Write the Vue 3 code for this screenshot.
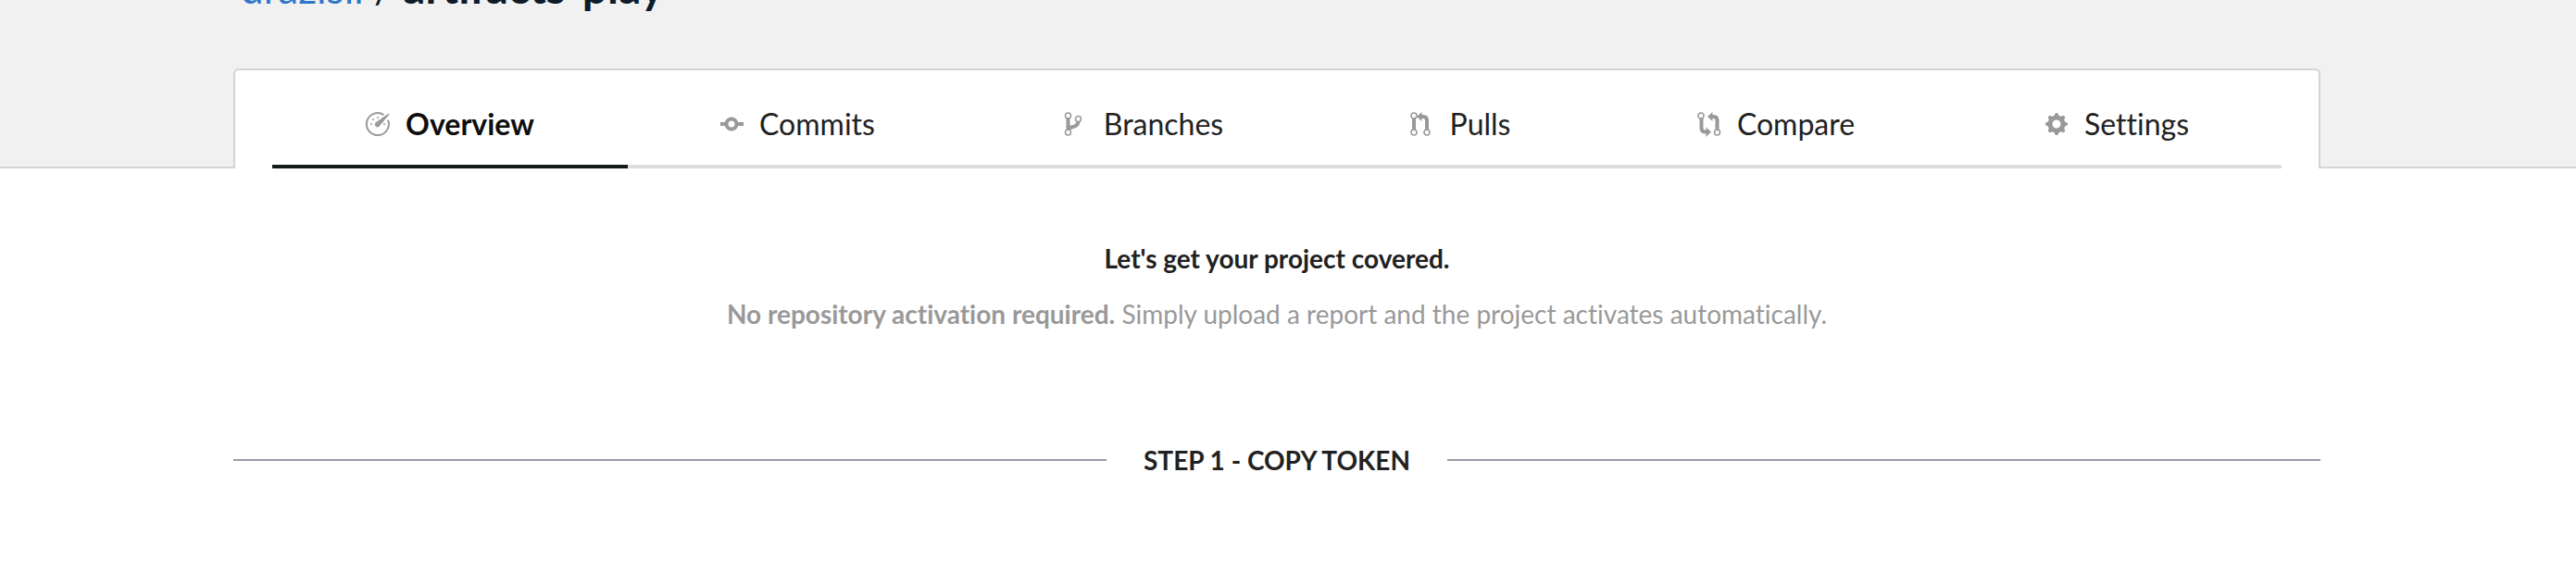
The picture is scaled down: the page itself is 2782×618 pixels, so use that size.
<script setup>
const tabs = [
  { name: 'Overview', icon: 'gauge', active: true },
  { name: 'Commits', icon: 'commit' },
  { name: 'Branches', icon: 'branch' },
  { name: 'Pulls', icon: 'pull' },
  { name: 'Compare', icon: 'compare' },
  { name: 'Settings', icon: 'gear' },
]
const teeth = [0, 45, 90, 135, 180, 225, 270, 315]
</script>

<template>
  <div class="page">
    <header class="head">
      <h1 class="title"><a href="#">drazisil</a> / <strong>artifacts-play</strong></h1>
      <nav class="card" aria-label="Repository">
        <div class="tabs">
          <a v-for="t in tabs" :key="t.name" href="#" class="tab" :class="{ active: t.active }">
            <svg class="icon" viewBox="0 0 26 26" aria-hidden="true">
              <g v-if="t.icon === 'gauge'">
                <path d="M19.5 3.1A12 12 0 1 0 24 8.6" class="line" />
                <path d="M25.6 2.6 15.4 14.6A2.9 2.9 0 1 1 11.6 10.8L24.4 1.8Z" class="fill" />
                <circle cx="13" cy="6" r="1" class="fill" />
                <circle cx="8" cy="8" r="1" class="fill" />
                <circle cx="6" cy="13" r="1" class="fill" />
                <circle cx="20" cy="13" r="1" class="fill" />
              </g>
              <g v-else-if="t.icon === 'commit'">
                <path d="M1 13H8M18 13H26" class="thick" />
                <circle cx="13" cy="13" r="5.5" class="ring" />
              </g>
              <g v-else-if="t.icon === 'branch'">
                <path d="M4.5 7V19M15.5 10C15.5 15 11 16 4.5 17.5" class="thick" />
                <circle cx="4.5" cy="4" r="3" class="node" />
                <circle cx="15.5" cy="7.5" r="3" class="node" />
                <circle cx="4.5" cy="22" r="3" class="node" />
              </g>
              <g v-else-if="t.icon === 'pull'">
                <path d="M4 7V19M18 19V9Q18 5 14 5H11" class="thick" />
                <path d="M12.5 0V10L7 5Z" class="fill" />
                <circle cx="4" cy="4" r="3" class="node" />
                <circle cx="18" cy="22" r="3" class="node" />
                <circle cx="4" cy="22" r="3" class="node" />
              </g>
              <g v-else-if="t.icon === 'compare'">
                <path d="M4.5 7V17Q4.5 21.5 8.5 21.5H10M21.5 19V9Q21.5 5 17.5 5H16" class="thick" />
                <path d="M16.5 0V10L11 5ZM9.5 16.5V27L15 21.5Z" class="fill" />
                <circle cx="4" cy="4" r="3" class="node" />
                <circle cx="21.5" cy="22" r="3" class="node" />
              </g>
              <g v-else>
                <path
                  v-for="a in teeth"
                  :key="a"
                  d="M9.8 6 11.4 1.4Q13 .4 14.6 1.4L16.2 6Z"
                  :transform="`rotate(${a} 13 13)`"
                  class="fill"
                />
                <circle cx="13" cy="13" r="7" class="gear" />
              </g>
            </svg>
            <span>{{ t.name }}</span>
          </a>
        </div>
      </nav>
    </header>
    <main class="body">
      <h2 class="lead">Let's get your project covered.</h2>
      <p class="note">
        <strong>No repository activation required.</strong> Simply upload a report and the project activates
        automatically.
      </p>
      <h3 class="step">STEP 1 - COPY TOKEN</h3>
    </main>
  </div>
</template>

<style>
body {
  margin: 0;
  background: #fff;
  overflow: hidden;
}
</style>

<style scoped>
.page {
  font-family: Lato, 'Liberation Sans', sans-serif;
  font-variant-ligatures: none;
  color: #212121;
}
.head {
  background: linear-gradient(#d4d4d4, #d4d4d4) bottom / 100% 2px no-repeat #f1f1f1;
  padding: 0 276px 0 252px;
}
.title {
  margin: -41px 0 0;
  padding: 0 8px 59px;
  font-size: 44px;
  line-height: 56px;
  font-weight: 400;
  color: #0e1b29;
}
.title a {
  color: #2f77c9;
  text-decoration: none;
}
.title strong {
  font-size: 48px;
  line-height: 48px;
  font-weight: 700;
}
.card {
  background: #fff;
  border: 2px solid #d4d4d4;
  border-bottom: 0;
  border-radius: 6px 6px 0 0;
  padding: 0 40px;
}
.tabs {
  display: grid;
  grid-template-columns: 384fr 366fr 382fr 302fr 380fr 356fr;
}
.tab {
  display: flex;
  align-items: center;
  justify-content: center;
  gap: 17px;
  height: 102px;
  border-bottom: 4px solid #ddd;
  font-size: 32px;
  line-height: 40px;
  color: #212121;
  text-decoration: none;
}
.tab.active {
  border-color: #151a1c;
  color: #0e0e0e;
  font-weight: 700;
}
.icon {
  width: 26px;
  height: 26px;
  overflow: visible;
  margin-top: 14px;
}
.tab span {
  margin-top: 14px;
}
.fill {
  fill: #999;
}
.line {
  fill: none;
  stroke: #999;
  stroke-width: 2;
}
.thick {
  fill: none;
  stroke: #999;
  stroke-width: 4;
}
.ring {
  fill: #fff;
  stroke: #999;
  stroke-width: 4;
}
.node {
  fill: #fff;
  stroke: #999;
  stroke-width: 1.5;
}
.gear {
  fill: #fff;
  stroke: #999;
  stroke-width: 5;
}
.body {
  padding: 79px 276px 0 252px;
  text-align: center;
}
.lead,
.note,
.step {
  margin: 0;
  font-size: 28px;
  line-height: 36px;
}
.note {
  margin-top: 24px;
  color: #999;
}
.step {
  display: flex;
  align-items: center;
  gap: 40px;
  margin-top: 122px;
}
.step::before,
.step::after {
  content: '';
  flex: 1;
  height: 2px;
  background: #9a9ca5;
}
</style>
